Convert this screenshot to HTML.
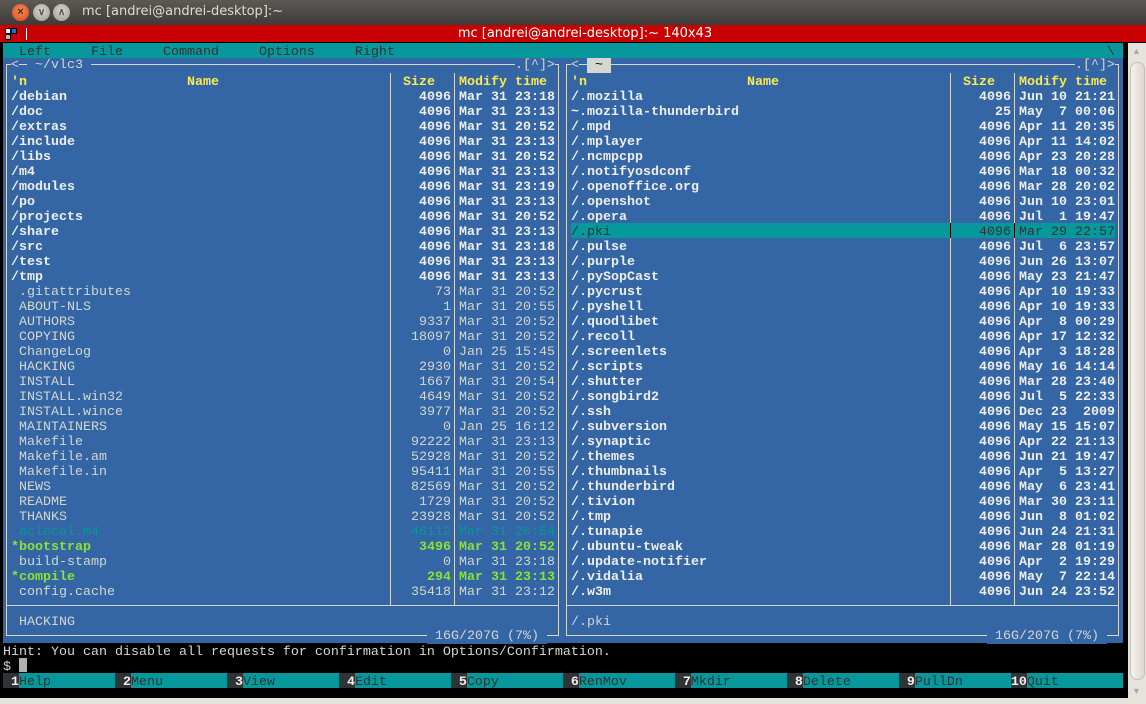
<!DOCTYPE html>
<html><head><meta charset="utf-8">
<style>
*{margin:0;padding:0;box-sizing:border-box}
body{width:1146px;height:704px;overflow:hidden;background:#000;position:relative;font-family:"Liberation Mono",monospace;}
.abs{position:absolute}
pre{position:absolute;font-family:"Liberation Mono","DejaVu Sans Mono",monospace;font-size:13.333px;line-height:15px;white-space:pre;margin:0;margin-top:2px}
.d{color:#eeeeec;font-weight:bold}
.f{color:#d3d7cf}
.x{color:#8ae234;font-weight:bold}
.a{color:#06989a}
.y{color:#fce94f;font-weight:bold}
.s{color:#2e3436}
.hl{background:#d3d7cf}
.vl{position:absolute;width:1px;background:#d3d7cf}
.hz{position:absolute;height:1px;background:#d3d7cf}
.bb{background:#3465a4}
</style></head><body>
<div class="abs" style="left:0;top:0;width:1146px;height:25px;background:linear-gradient(#5d5a55,#3c3b37);"></div>
<div class="abs" style="left:12px;top:4px;width:17px;height:17px;border-radius:50%;background:radial-gradient(circle at 50% 40%,#f48a5c,#d44a1c);"></div>
<div class="abs" style="left:33px;top:4px;width:17px;height:17px;border-radius:50%;background:radial-gradient(circle at 50% 40%,#d8d6d0,#9a9890);"></div>
<div class="abs" style="left:53px;top:4px;width:17px;height:17px;border-radius:50%;background:radial-gradient(circle at 50% 40%,#d8d6d0,#9a9890);"></div>
<div class="abs" style="left:14px;top:3px;width:13px;font:bold 11px 'Liberation Sans',sans-serif;color:#5a2a10;text-align:center;line-height:19px">×</div>
<div class="abs" style="left:35px;top:3px;width:13px;font:bold 10px 'Liberation Sans',sans-serif;color:#555;text-align:center;line-height:19px">∨</div>
<div class="abs" style="left:55px;top:3px;width:13px;font:bold 10px 'Liberation Sans',sans-serif;color:#555;text-align:center;line-height:19px">∧</div>
<div class="abs" style="left:82px;top:4px;font:13px 'DejaVu Sans','Liberation Sans',sans-serif;color:#dfdbd2;">mc [andrei@andrei-desktop]:~</div>
<div class="abs" style="left:0;top:25px;width:1146px;height:17px;background:#c80000;"></div>
<div class="abs" style="left:5px;top:28px;width:6px;height:6px;background:#fff;border:1px solid #000"></div>
<div class="abs" style="left:11px;top:28px;width:6px;height:6px;background:#1a6fd0;border:1px solid #000"></div>
<div class="abs" style="left:5px;top:34px;width:6px;height:6px;background:#bbb;border:1px solid #000"></div>
<div class="abs" style="left:26px;top:28px;width:1px;height:12px;background:#fff"></div>
<div class="abs" style="left:0;top:26px;width:1170px;text-align:center;font:13px 'DejaVu Sans','Liberation Sans',sans-serif;color:#fff;">mc [andrei@andrei-desktop]:~ 140x43</div>
<div class="abs" style="left:0;top:42px;width:1146px;height:1px;background:#000"></div>
<div class="abs" style="left:1128px;top:43px;width:18px;height:661px;background:#e6e2dc;"></div>
<div class="abs" style="left:1130px;top:62px;width:15px;height:618px;border-radius:7px;background:linear-gradient(90deg,#f4f2ee,#ddd8d0);border:1px solid #c4beb4"></div>
<div class="abs" style="left:1132px;top:46px;font:9px sans-serif;color:#aaa">▲</div>
<div class="abs" style="left:1132px;top:686px;font:9px sans-serif;color:#aaa">▼</div>
<div class="abs" style="left:0;top:698px;width:1128px;height:6px;background:#e6e2dc;"></div>
<div class="abs" style="left:0;top:43px;width:3px;height:655px;background:#000"></div>
<div class="abs" style="left:3px;top:43px;width:1120px;height:15px;background:#06989a"></div>
<pre style="left:3px;top:43px;color:#2e3436">  Left     File     Command     Options     Right                                                                                         \</pre>
<div class="abs bb" style="left:3px;top:58px;width:1120px;height:585px"></div>
<div class="abs" style="left:571px;top:223px;width:544px;height:15px;background:#06989a"></div>
<div class="hz" style="left:6px;top:64px;width:553px"></div>
<div class="hz" style="left:6px;top:635px;width:553px"></div>
<div class="hz" style="left:6px;top:605px;width:553px"></div>
<div class="vl" style="left:6px;top:64px;height:572px"></div>
<div class="vl" style="left:558px;top:64px;height:572px"></div>
<div class="vl" style="left:390px;top:73px;height:532px"></div>
<div class="vl" style="left:454px;top:73px;height:532px"></div>
<div class="hz" style="left:566px;top:64px;width:553px"></div>
<div class="hz" style="left:566px;top:635px;width:553px"></div>
<div class="hz" style="left:566px;top:605px;width:553px"></div>
<div class="vl" style="left:566px;top:64px;height:572px"></div>
<div class="vl" style="left:1118px;top:64px;height:572px"></div>
<div class="vl" style="left:950px;top:73px;height:532px"></div>
<div class="vl" style="left:1014px;top:73px;height:532px"></div>
<div class="vl" style="left:950px;top:223px;height:15px;background:#000"></div>
<div class="vl" style="left:1014px;top:223px;height:15px;background:#000"></div>
<pre class="f" style="left:11px;top:56px"><span class="bb">&lt;</span></pre>
<pre class="f" style="left:27px;top:56px"><span class="bb"> ~/vlc3 </span></pre>
<pre class="f" style="left:515px;top:56px"><span class="bb">.[^]&gt;</span></pre>
<pre class="f" style="left:571px;top:56px"><span class="bb">&lt;</span></pre>
<pre style="left:587px;top:56px;color:#000"><span class="hl"> ~ </span></pre>
<pre class="f" style="left:1075px;top:56px"><span class="bb">.[^]&gt;</span></pre>
<pre class="f" style="left:427px;top:627px"><span class="bb"> 16G/207G (7%) </span></pre>
<pre class="f" style="left:987px;top:627px"><span class="bb"> 16G/207G (7%) </span></pre>
<pre class="y" style="left:11px;top:73px">'n                    Name</pre>
<pre class="y" style="left:403px;top:73px">Size</pre>
<pre class="y" style="left:459px;top:73px">Modify time</pre>
<pre class="y" style="left:571px;top:73px">'n                    Name</pre>
<pre class="y" style="left:963px;top:73px">Size</pre>
<pre class="y" style="left:1019px;top:73px">Modify time</pre>
<pre style="left:11px;top:88px"><span class="d">/debian
/doc
/extras
/include
/libs
/m4
/modules
/po
/projects
/share
/src
/test
/tmp</span>
<span class="f"> .gitattributes
 ABOUT-NLS
 AUTHORS
 COPYING
 ChangeLog
 HACKING
 INSTALL
 INSTALL.win32
 INSTALL.wince
 MAINTAINERS
 Makefile
 Makefile.am
 Makefile.in
 NEWS
 README
 THANKS</span>
<span class="a"> aclocal.m4</span>
<span class="x">*bootstrap</span>
<span class="f"> build-stamp</span>
<span class="x">*compile</span>
<span class="f"> config.cache</span></pre>
<pre style="left:395px;top:88px;width:56px;text-align:right"><span class="d">4096
4096
4096
4096
4096
4096
4096
4096
4096
4096
4096
4096
4096</span>
<span class="f">73
1
9337
18097
0
2930
1667
4649
3977
0
92222
52928
95411
82569
1729
23928</span>
<span class="a">46112</span>
<span class="x">3496</span>
<span class="f">0</span>
<span class="x">294</span>
<span class="f">35418</span></pre>
<pre style="left:459px;top:88px"><span class="d">Mar 31 23:18
Mar 31 23:13
Mar 31 20:52
Mar 31 23:13
Mar 31 20:52
Mar 31 23:13
Mar 31 23:19
Mar 31 23:13
Mar 31 20:52
Mar 31 23:13
Mar 31 23:18
Mar 31 23:13
Mar 31 23:13</span>
<span class="f">Mar 31 20:52
Mar 31 20:55
Mar 31 20:52
Mar 31 20:52
Jan 25 15:45
Mar 31 20:52
Mar 31 20:54
Mar 31 20:52
Mar 31 20:52
Jan 25 16:12
Mar 31 23:13
Mar 31 20:52
Mar 31 20:55
Mar 31 20:52
Mar 31 20:52
Mar 31 20:52</span>
<span class="a">Mar 31 20:54</span>
<span class="x">Mar 31 20:52</span>
<span class="f">Mar 31 23:18</span>
<span class="x">Mar 31 23:13</span>
<span class="f">Mar 31 23:12</span></pre>
<pre style="left:571px;top:88px"><span class="d">/.mozilla
~.mozilla-thunderbird
/.mpd
/.mplayer
/.ncmpcpp
/.notifyosdconf
/.openoffice.org
/.openshot
/.opera</span>
<span class="s">/.pki</span>
<span class="d">/.pulse
/.purple
/.pySopCast
/.pycrust
/.pyshell
/.quodlibet
/.recoll
/.screenlets
/.scripts
/.shutter
/.songbird2
/.ssh
/.subversion
/.synaptic
/.themes
/.thumbnails
/.thunderbird
/.tivion
/.tmp
/.tunapie
/.ubuntu-tweak
/.update-notifier
/.vidalia
/.w3m</span></pre>
<pre style="left:955px;top:88px;width:56px;text-align:right"><span class="d">4096
25
4096
4096
4096
4096
4096
4096
4096</span>
<span class="s">4096</span>
<span class="d">4096
4096
4096
4096
4096
4096
4096
4096
4096
4096
4096
4096
4096
4096
4096
4096
4096
4096
4096
4096
4096
4096
4096
4096</span></pre>
<pre style="left:1019px;top:88px"><span class="d">Jun 10 21:21
May  7 00:06
Apr 11 20:35
Apr 11 14:02
Apr 23 20:28
Mar 18 00:32
Mar 28 20:02
Jun 10 23:01
Jul  1 19:47</span>
<span class="s">Mar 29 22:57</span>
<span class="d">Jul  6 23:57
Jun 26 13:07
May 23 21:47
Apr 10 19:33
Apr 10 19:33
Apr  8 00:29
Apr 17 12:32
Apr  3 18:28
May 16 14:14
Mar 28 23:40
Jul  5 22:33
Dec 23  2009
May 15 15:07
Apr 22 21:13
Jun 21 19:47
Apr  5 13:27
May  6 23:41
Mar 30 23:11
Jun  8 01:02
Jun 24 21:31
Mar 28 01:19
Apr  2 19:29
May  7 22:14
Jun 24 23:52</span></pre>
<pre class="f" style="left:19px;top:613px">HACKING</pre>
<pre class="f" style="left:571px;top:613px">/.pki</pre>
<pre class="f" style="left:3px;top:643px">Hint: You can disable all requests for confirmation in Options/Confirmation.</pre>
<pre class="f" style="left:3px;top:658px">$ </pre>
<div class="abs" style="left:19px;top:658px;width:8px;height:14px;background:#b0b0b0"></div>
<div class="abs" style="left:3px;top:673px;width:1120px;height:15px;background:#06989a"></div>
<div class="abs" style="left:3px;top:673px;width:16px;height:15px;background:#2e3436"></div>
<div class="abs" style="left:115px;top:673px;width:16px;height:15px;background:#2e3436"></div>
<div class="abs" style="left:227px;top:673px;width:16px;height:15px;background:#2e3436"></div>
<div class="abs" style="left:339px;top:673px;width:16px;height:15px;background:#2e3436"></div>
<div class="abs" style="left:451px;top:673px;width:16px;height:15px;background:#2e3436"></div>
<div class="abs" style="left:563px;top:673px;width:16px;height:15px;background:#2e3436"></div>
<div class="abs" style="left:675px;top:673px;width:16px;height:15px;background:#2e3436"></div>
<div class="abs" style="left:787px;top:673px;width:16px;height:15px;background:#2e3436"></div>
<div class="abs" style="left:899px;top:673px;width:16px;height:15px;background:#2e3436"></div>
<div class="abs" style="left:1011px;top:673px;width:16px;height:15px;background:#2e3436"></div>
<pre style="left:3px;top:673px;color:#2e3436"><b style="color:#eeeeec"> 1</b>Help        <b style="color:#eeeeec"> 2</b>Menu        <b style="color:#eeeeec"> 3</b>View        <b style="color:#eeeeec"> 4</b>Edit        <b style="color:#eeeeec"> 5</b>Copy        <b style="color:#eeeeec"> 6</b>RenMov      <b style="color:#eeeeec"> 7</b>Mkdir       <b style="color:#eeeeec"> 8</b>Delete      <b style="color:#eeeeec"> 9</b>PullDn      <b style="color:#eeeeec">10</b>Quit</pre>
</body></html>
